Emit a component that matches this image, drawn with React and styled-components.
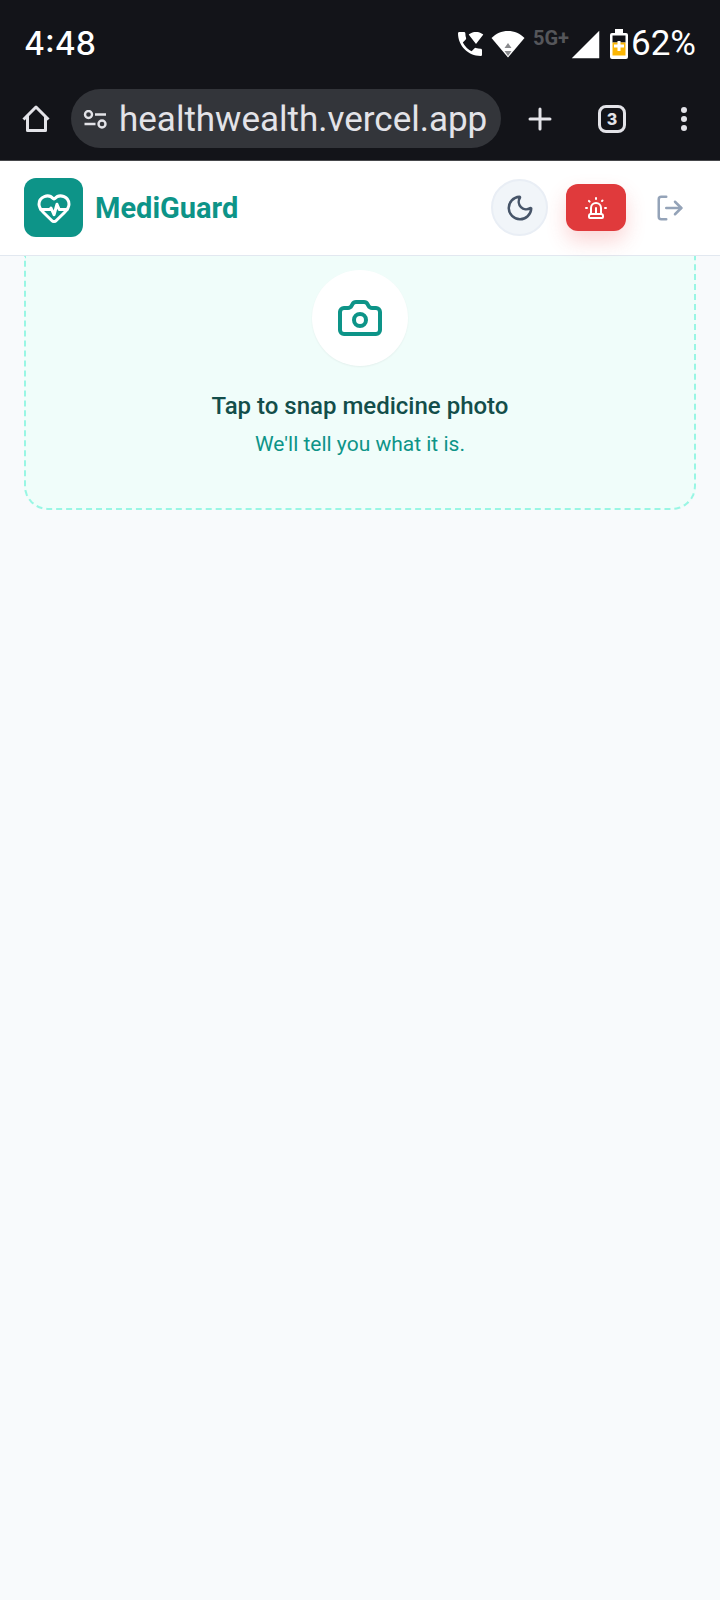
import React from 'react';
import styled, { createGlobalStyle, ThemeProvider } from 'styled-components';
import { Camera, HeartPulse, LogOut, Moon, Siren } from 'lucide-react';
import { MdSignalCellular4Bar, MdWifiCalling } from 'react-icons/md';

const theme = {
  colors: {
    background: '#f8fafc',
    white: '#ffffff',
    border: '#e2e8f0',
    primary: '#0d9488',
    primaryDark: '#134e4a',
    primaryLight: '#f0fdfa',
    primaryBorder: '#99f6e4',
    danger: '#e03a3c',
    muted: '#94a3b8',
    slate: '#475569',
    chrome: '#131419',
    chromeField: '#33353a',
    chromeText: '#e3e3e8',
  },
  fonts: {
    body: "Roboto, 'Liberation Sans', sans-serif",
    clock: "Inter, 'Liberation Sans', sans-serif",
  },
};

const GlobalStyle = createGlobalStyle`
  * {
    box-sizing: border-box;
  }

  body {
    margin: 0;
    background-color: ${theme.colors.background};
    font-family: ${theme.fonts.body};
  }

  button {
    margin: 0;
    padding: 0;
    border: none;
    background: none;
    color: inherit;
    font: inherit;
    cursor: pointer;
  }

  svg {
    display: block;
    flex-shrink: 0;
  }
`;

const BrowserBar = styled.div`
  display: flex;
  flex-direction: column;
  gap: 27px;
  padding: 26px 0 12px;
  border-bottom: 1px solid #46474b;
  background-color: ${({ theme }) => theme.colors.chrome};
  color: ${({ theme }) => theme.colors.chromeText};
`;

const StatusBar = styled.div`
  display: flex;
  justify-content: space-between;
  align-items: center;
  padding: 0 24px;
  color: ${({ theme }) => theme.colors.white};
  line-height: 36px;
`;

const Clock = styled.time`
  font-family: ${({ theme }) => theme.fonts.clock};
  font-size: 32px;
  font-weight: 500;
`;

const StatusIcons = styled.div`
  display: flex;
  align-items: center;
`;

const WifiSlot = styled.span`
  margin: 0 8px 0 5px;
`;

const Network = styled.span`
  align-self: flex-start;
  color: #55565a;
  font-size: 20px;
  font-weight: 700;
  line-height: 24px;
`;

const BatterySlot = styled.span`
  margin: 0 3px 0 8px;
`;

const BatteryLevel = styled.span`
  font-size: 35px;
`;

const AddressRow = styled.div`
  display: flex;
  align-items: center;
  padding: 0 12px;
`;

const ChromeButton = styled.button`
  display: flex;
  justify-content: center;
  align-items: center;
  width: 48px;
  height: 48px;
  flex-shrink: 0;
`;

const ChromeActions = styled.div`
  display: flex;
  gap: 24px;
`;

const AddressField = styled.label`
  display: flex;
  flex: 1;
  align-items: center;
  gap: 12px;
  min-width: 0;
  height: 59px;
  margin: 0 15px 0 11px;
  padding: 2px 8px 0 12px;
  border-radius: 30px;
  background-color: ${({ theme }) => theme.colors.chromeField};
`;

const AddressInput = styled.input`
  flex: 1;
  min-width: 0;
  padding: 0;
  border: none;
  outline: none;
  background: none;
  color: inherit;
  font-family: ${({ theme }) => theme.fonts.body};
  font-size: 35px;
  line-height: 44px;
`;

const TabCount = styled.span`
  display: flex;
  justify-content: center;
  align-items: center;
  width: 28px;
  height: 28px;
  border: 3px solid currentColor;
  border-radius: 8px;
  font-family: ${({ theme }) => theme.fonts.clock};
  font-size: 16px;
  font-weight: 800;
`;

const Header = styled.header`
  position: sticky;
  top: 0;
  z-index: 1;
  display: flex;
  justify-content: space-between;
  align-items: center;
  padding: 17px 24px 18px;
  border-bottom: 1px solid ${({ theme }) => theme.colors.border};
  background-color: ${({ theme }) => theme.colors.white};
`;

const Brand = styled.div`
  display: flex;
  align-items: center;
  gap: 12px;
`;

const BrandIcon = styled.div`
  display: flex;
  justify-content: center;
  align-items: center;
  width: 59px;
  height: 59px;
  border-radius: 12px;
  background-color: ${({ theme }) => theme.colors.primary};
  color: ${({ theme }) => theme.colors.white};
`;

const BrandName = styled.h1`
  margin: 0;
  color: ${({ theme }) => theme.colors.primary};
  font-size: 29px;
  font-weight: 700;
  line-height: 40px;
`;

const HeaderActions = styled.div`
  display: flex;
  align-items: center;
  gap: 18px;
`;

const HeaderButton = styled.button`
  display: flex;
  justify-content: center;
  align-items: center;
  width: 52px;
  height: 52px;
  color: ${({ theme }) => theme.colors.muted};
`;

const ThemeButton = styled(HeaderButton)`
  width: 57px;
  height: 57px;
  border: 2px solid #e9eef5;
  border-radius: 50%;
  background-color: #f1f5f9;
  color: ${({ theme }) => theme.colors.slate};
`;

const SosButton = styled(HeaderButton)`
  width: 60px;
  height: 47px;
  border-radius: 12px;
  background-color: ${({ theme }) => theme.colors.danger};
  box-shadow: 0 10px 20px rgba(239, 68, 68, 0.22);
  color: ${({ theme }) => theme.colors.white};
`;

const Main = styled.main`
  padding: 0 24px;
`;

const SnapCard = styled.button`
  display: flex;
  flex-direction: column;
  align-items: center;
  width: 100%;
  padding: 14px 24px 50px;
  border: 2px dashed ${({ theme }) => theme.colors.primaryBorder};
  border-top: none;
  border-radius: 0 0 24px 24px;
  background-color: ${({ theme }) => theme.colors.primaryLight};
`;

const SnapIcon = styled.span`
  display: flex;
  justify-content: center;
  align-items: center;
  width: 96px;
  height: 96px;
  margin-bottom: 24px;
  border-radius: 50%;
  background-color: ${({ theme }) => theme.colors.white};
  box-shadow: 0 1px 2px rgba(0, 0, 0, 0.05);
  color: ${({ theme }) => theme.colors.primary};
`;

const SnapTitle = styled.span`
  margin-bottom: 8px;
  color: ${({ theme }) => theme.colors.primaryDark};
  font-size: 24px;
  font-weight: 500;
  line-height: 32px;
`;

const SnapHint = styled.span`
  color: ${({ theme }) => theme.colors.primary};
  font-size: 21px;
  line-height: 28px;
`;

const WifiIcon = () => (
  <svg width="34" height="28" viewBox="0 0 34 28" aria-hidden="true">
    <path d="M17 27.5 0.5 8C5 3.6 10.5 1 17 1s12 2.6 16.5 7z" fill="#fff" />
    <path d="M13.5 18 17 13l3.5 5zM13.5 21h7L17 26z" fill="#8a8b8e" />
  </svg>
);

const BatteryIcon = () => (
  <svg width="18" height="30" viewBox="0 0 18 30" aria-hidden="true">
    <path d="M5 0h8v4h3a2 2 0 0 1 2 2v22a2 2 0 0 1-2 2H2a2 2 0 0 1-2-2V6a2 2 0 0 1 2-2h3z" fill="#fff" />
    <path d="M2.5 6.5h13v7h-13z" fill="#131419" />
    <path d="M2.5 13.5h13v13h-13z" fill="#fbb605" />
    <path d="M7.500 12h3v3.500H14v3h-3.500V22h-3v-3.500H4v-3h3.500z" fill="#fff" />
  </svg>
);

const HomeIcon = () => (
  <svg width="28" height="28" viewBox="0 0 28 28" fill="none" stroke="currentColor" strokeWidth="3" strokeLinejoin="round" aria-hidden="true">
    <path d="M1.5 14.5 14 2l12.5 12.5M5.5 11v14.500h18V11" />
  </svg>
);

const SiteInfoIcon = () => (
  <svg width="24" height="20" viewBox="0 0 24 20" fill="none" stroke="currentColor" strokeWidth="2.4" aria-hidden="true">
    <circle cx="5.5" cy="4.5" r="3.5" />
    <path d="M12 4.500h11M1.500 14h11" />
    <circle cx="19" cy="14" r="3.5" />
  </svg>
);

const PlusIcon = () => (
  <svg width="24" height="24" viewBox="0 0 24 24" stroke="currentColor" strokeWidth="3" strokeLinecap="round" aria-hidden="true">
    <path d="M12 2v20M2 12h20" />
  </svg>
);

const MenuIcon = () => (
  <svg width="8" height="26" viewBox="0 0 8 26" fill="currentColor" aria-hidden="true">
    <circle cx="4" cy="4" r="3" />
    <circle cx="4" cy="13" r="3" />
    <circle cx="4" cy="22" r="3" />
  </svg>
);

const App = () => {
  return (
    <ThemeProvider theme={theme}>
      <GlobalStyle />
      <BrowserBar>
        <StatusBar>
          <Clock>4:48</Clock>
          <StatusIcons>
            <MdWifiCalling size={32} />
            <WifiSlot>
              <WifiIcon />
            </WifiSlot>
            <Network>5G+</Network>
            <MdSignalCellular4Bar size={33} />
            <BatterySlot>
              <BatteryIcon />
            </BatterySlot>
            <BatteryLevel>62%</BatteryLevel>
          </StatusIcons>
        </StatusBar>
        <AddressRow>
          <ChromeButton aria-label="Home">
            <HomeIcon />
          </ChromeButton>
          <AddressField>
            <SiteInfoIcon />
            <AddressInput type="text" aria-label="Address" defaultValue="healthwealth.vercel.app" />
          </AddressField>
          <ChromeActions>
            <ChromeButton aria-label="New tab">
              <PlusIcon />
            </ChromeButton>
            <ChromeButton aria-label="Open tabs">
              <TabCount>3</TabCount>
            </ChromeButton>
            <ChromeButton aria-label="Menu">
              <MenuIcon />
            </ChromeButton>
          </ChromeActions>
        </AddressRow>
      </BrowserBar>

      <Header>
        <Brand>
          <BrandIcon>
            <HeartPulse size={36} />
          </BrandIcon>
          <BrandName>MediGuard</BrandName>
        </Brand>
        <HeaderActions>
          <ThemeButton aria-label="Dark mode">
            <Moon size={30} />
          </ThemeButton>
          <SosButton aria-label="Emergency">
            <Siren size={24} />
          </SosButton>
          <HeaderButton aria-label="Log out">
            <LogOut size={30} />
          </HeaderButton>
        </HeaderActions>
      </Header>

      <Main>
        <SnapCard>
          <SnapIcon>
            <Camera size={48} />
          </SnapIcon>
          <SnapTitle>Tap to snap medicine photo</SnapTitle>
          <SnapHint>We'll tell you what it is.</SnapHint>
        </SnapCard>
      </Main>
    </ThemeProvider>
  );
};

export default App;
